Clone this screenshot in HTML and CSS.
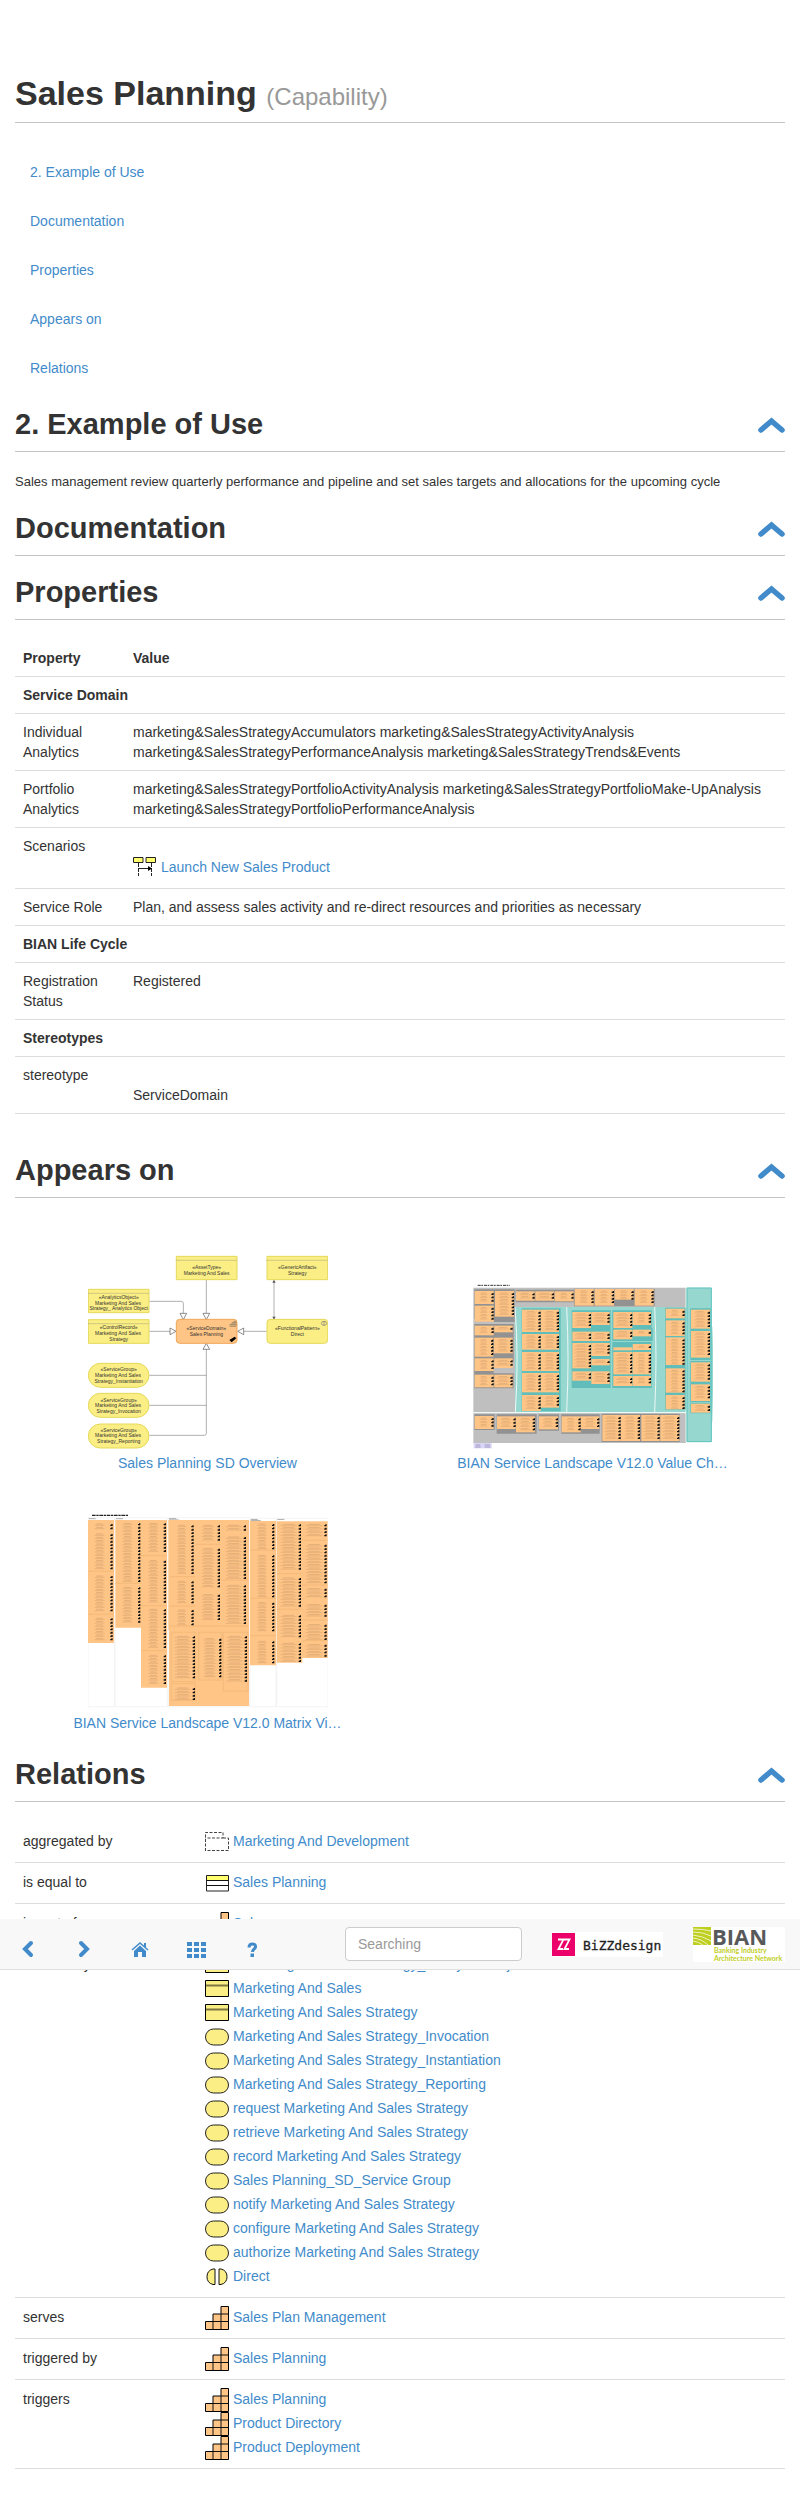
FILE: index.html
```html
<!DOCTYPE html>
<html lang="en">
<head>
<meta charset="utf-8">
<meta name="viewport" content="width=device-width, initial-scale=1">
<title>Sales Planning (Capability)</title>
<link rel="stylesheet" href="styles.css">
</head>
<body>
<svg class="symbols" aria-hidden="true">
  <symbol id="chev" viewBox="0 0 27 16"><path d="M3 13 13.500 4 24 13" fill="none" stroke="#428bca" stroke-width="5.500" stroke-linecap="round"/></symbol>
  <symbol id="steps" viewBox="0 0 24 24"><path d="M.5 15.500h7.500v-7.500h8v-7.500h7.500v23H.5z" fill="#ffc586" stroke="#000"/><path d="M8 15.500v8M16 8v15.500M8 15.500h15.500M16 8h7.500" stroke="#111" fill="none"/></symbol>
  <symbol id="object" viewBox="0 0 24 24"><path d="M.5 3.500h23v16H.5z" fill="#fbee84" stroke="#000"/><path d="M1 8.500h22" stroke="#7d7742" stroke-width="2"/></symbol>
  <symbol id="service" viewBox="0 0 24 24"><rect x=".5" y="4" width="23" height="16" rx="8" fill="#fbee84" stroke="#222"/></symbol>
  <symbol id="interaction" viewBox="0 0 24 24"><path d="M10 4H8a8 8 0 0 0 0 15.500h2z" fill="#fbee84" stroke="#111"/><path d="M14 4h2a8 8 0 0 1 0 15.500h-2z" fill="#fbee84" stroke="#111"/></symbol>
  <symbol id="group" viewBox="0 0 24 24"><path d="M.5 21V2.500H18V8H.5M18 8h5.500v12.500H.5" fill="none" stroke="#444" stroke-dasharray="3 1.500"/></symbol>
  <symbol id="equal" viewBox="0 0 24 24"><path d="M1.500 4.500h22v15.500h-22z" fill="#fff" stroke="#222"/><path d="M2 5h21v4H2z" fill="#ffff70"/><path d="M1.500 9.500h22M1.500 14.500h22" stroke="#111"/></symbol>
  <symbol id="sequence" viewBox="0 0 24 24"><path d="M.5 1.500h9.500v5H.5zM13 1.500h9.500v5H13z" fill="#ffff70" stroke="#222"/><path d="M5.500 7v13M18.500 7v13" stroke="#222" stroke-dasharray="4 1"/><path d="M5.500 12.500h11" stroke="#222"/><path d="M15 10l4 2.500-4 2.500z"/></symbol>
</svg>

<main class="page">
  <h1>Sales Planning <small>(Capability)</small></h1>
  <nav class="toc" aria-label="Sections">
    <a href="#example">2. Example of Use</a>
    <a href="#documentation">Documentation</a>
    <a href="#properties">Properties</a>
    <a href="#appears">Appears on</a>
    <a href="#relations">Relations</a>
  </nav>

  <section id="example">
    <div class="head"><h2>2. Example of Use</h2><a href="#top" aria-label="Back to top"><svg><use href="#chev"/></svg></a></div>
    <p class="lead">Sales management review quarterly performance and pipeline and set sales targets and allocations for the upcoming cycle</p>
  </section>
  <section id="documentation">
    <div class="head"><h2>Documentation</h2><a href="#top" aria-label="Back to top"><svg><use href="#chev"/></svg></a></div>
  </section>
  <section id="properties">
    <div class="head"><h2>Properties</h2><a href="#top" aria-label="Back to top"><svg><use href="#chev"/></svg></a></div>
    <table class="props">
      <thead><tr><th class="key">Property</th><th>Value</th></tr></thead>
      <tbody>
        <tr><th colspan="2">Service Domain</th></tr>
        <tr><td>Individual Analytics</td><td>marketing&amp;SalesStrategyAccumulators marketing&amp;SalesStrategyActivityAnalysis marketing&amp;SalesStrategyPerformanceAnalysis marketing&amp;SalesStrategyTrends&amp;Events</td></tr>
        <tr><td>Portfolio Analytics</td><td>marketing&amp;SalesStrategyPortfolioActivityAnalysis marketing&amp;SalesStrategyPortfolioMake-UpAnalysis marketing&amp;SalesStrategyPortfolioPerformanceAnalysis</td></tr>
        <tr><td>Scenarios</td><td><ul class="items below"><li><svg><use href="#sequence"/></svg><a href="#launch">Launch New Sales Product</a></li></ul></td></tr>
        <tr><td>Service Role</td><td>Plan, and assess sales activity and re-direct resources and priorities as necessary</td></tr>
        <tr><th colspan="2">BIAN Life Cycle</th></tr>
        <tr><td>Registration Status</td><td>Registered</td></tr>
        <tr><th colspan="2">Stereotypes</th></tr>
        <tr><td>stereotype</td><td><div class="below">ServiceDomain</div></td></tr>
      </tbody>
    </table>
  </section>

  <section id="appears">
    <div class="head"><h2>Appears on</h2><a href="#top" aria-label="Back to top"><svg><use href="#chev"/></svg></a></div>
    <div class="views">
      <a class="view" href="#overview">
        <svg class="thumb" viewBox="84 69 720 600">
          <g fill="none" stroke="#888" stroke-width="2"><path d="M268 214h96q6 0 6 6v30M439 150v100M268 304h62M620 304h-70M268 436h171M268 526h171M268 616h165q6 0 6-6V358"/><path d="M642 152v114"/></g>
          <g fill="#fff" stroke="#555" stroke-width="2"><path d="M360 250h20l-10 19zM429 250h20l-10 19zM330 294v20l18-10zM551 294v20l-18-10zM429 358h20l-10-18z"/></g>
          <path d="M642 149l5 9h-10zM642 269l5-9h-10z" fill="#555"/>
          <g fill="#fbee84" stroke="#e3d95a" stroke-width="3"><path d="M349 79h182v70H349zM621 79h182v70H621zM85 178h182v70H85zM85 269h182v71H85z"/><rect x="621" y="268" width="182" height="72" rx="10"/><rect x="85" y="400" width="182" height="72" rx="36"/><rect x="85" y="490" width="182" height="72" rx="36"/><rect x="85" y="582" width="182" height="72" rx="36"/></g>
          <path d="M347 91h184M619 91h184M82 190h185M82 281h185" stroke="#bdb77a" stroke-width="2"/>
          <rect x="349" y="268" width="182" height="72" rx="10" fill="#ffc586" stroke="#efa658" stroke-width="3"/>
          <path d="M510 289v-6h6v-5h6v-4h6v15zM516 289v-6h12M522 289v-11h6" fill="none" stroke="#665" stroke-width="1.500"/><path d="M508 330l16-10 5 5-14 12z"/><ellipse cx="792" cy="280" rx="8" ry="6" fill="none" stroke="#777" stroke-width="2"/><path d="M792 274v12" stroke="#777" stroke-width="2"/>
          <g class="tiny">
            <text x="440" y="117">«AssetType»</text><text x="440" y="135">Marketing And Sales</text>
            <text x="712" y="117">«GenericArtifact»</text><text x="712" y="135">Strategy</text>
            <text x="176" y="207">«AnalyticsObject»</text><text x="174" y="225">Marketing And Sales</text><text x="176" y="241">Strategy_ Analytics Object</text>
            <text x="176" y="297">«ControlRecord»</text><text x="174" y="315">Marketing And Sales</text><text x="176" y="333">Strategy</text>
            <text x="439" y="300">«ServiceDomain»</text><text x="439" y="318">Sales Planning</text>
            <text x="712" y="300">«FunctionalPattern»</text><text x="712" y="318">Direct</text>
            <text x="176" y="423">«ServiceGroup»</text><text x="174" y="441">Marketing And Sales</text><text x="176" y="459">Strategy_Instantiation</text>
            <text x="176" y="515">«ServiceGroup»</text><text x="174" y="531">Marketing And Sales</text><text x="176" y="549">Strategy_Invocation</text>
            <text x="176" y="606">«ServiceGroup»</text><text x="174" y="621">Marketing And Sales</text><text x="176" y="639">Strategy_Reporting</text>
          </g>
        </svg>
        <span>Sales Planning SD Overview</span>
      </a>
      <a class="view" href="#valuechain">
        <svg class="thumb" viewBox="97 -21 720 600">
          <g transform="translate(0 0)">
          <path d="M111 76h97" stroke="#333" stroke-width="3" stroke-dasharray="9 2 5 3"/>
          <path d="M98 83h638v373H98zM98 459h638v90H98z" fill="#bfbfbf"/>
          <path d="M223 141h514v315H223zM737 83h76v463h-76z" fill="#96d8d0"/>
          <path d="M813 200q5 115 0 285" fill="#96d8d0" stroke="#96d8d0" stroke-width="4"/>
          <path d="M223 141q12 150 1 315M378 141q8 150 0 315M642 141q8 150 0 315M736 83v463M98 458h638" fill="none" stroke="#edf8f5" stroke-width="3"/>
          <path d="M739 84h73v461h-73z" fill="none" stroke="#5fc4be" stroke-width="3"/>
          <g fill="#929292"><path d="M101 88h121v98H160v-10h-59zM101 192h118v39H101zM101 230h118v76h-60v37h-58zM101 340h118v45H101zM225 89h175v38H225zM400 86h242v53H400zM101 463h61v47h-61zM168 463h120v58H168zM294 463h61v49h-61zM362 463h115v58H362zM483 461h234v85H483z"/></g>
          <g fill="#60bdb9"><path d="M243 145h117v309H243zM393 151h117v61H393zM393 211h117v121H393zM393 329h117v55H393zM515 151h118v56H515zM515 205h121v38H515zM515 246h118v99H515zM515 344h118v40H515zM673 143h62v306h-62zM749 145h61v64h-61zM749 208h61v92h-61zM749 303h61v64h-61zM749 367h61v60h-61zM749 429h61v31h-61z"/></g>
          <g id="landscape-boxes"></g>
          <path d="M99 549h54v16H99z" fill="#d9d5f5"/><path d="M105 555h14M132 555h16M104 561h16M132 561h17" stroke="#887eaa" stroke-width="2"/>
          </g>
        </svg>
        <span>BIAN Service Landscape V12.0 Value Ch…</span>
      </a>
      <a class="view" href="#matrix">
        <svg class="thumb" viewBox="84 69 720 600">
          <path d="M96 76h108" stroke="#222" stroke-width="4" stroke-dasharray="11 2 7 2"/>
          <path d="M86 86h21M168 86h21M327 86h22M572 88h21M652 88h21M327 90h30M572 92h30" stroke="#777" stroke-width="2"/>
          <path d="M84 83h79v567H84zM165 83h157v567H165zM325 83h243v567H325zM570 85h78v565h-78zM650 85h154v565H650z" fill="none" stroke="#eee" stroke-width="2"/>
          <path d="M84 90h78v369H84zM166 90h155v503h-78V413h-77zM325 90h242v558H327V420h-2zM570 93h78v433h-78zM650 94h153v410h-76v14h-77z" fill="#ffc586"/>
          <path d="M84 244h78M84 373h78M166 280h76M243 197h77M243 347h77M243 482h77M329 260h76M329 348h76M407 163h76M329 408h154M485 270h79M485 408h79M571 180h76M571 325h76M571 437h76M651 251h76M651 358h76M728 151h75M728 285h75M728 390h75M728 452h75M334 427h72v148h-72zM334 581h72v50h-72zM416 427h70v143h-70zM490 427h74v176h-74z" fill="none" stroke="#edb374" stroke-width="2"/>
          <g id="matrix-stacks"></g>
        </svg>
        <span>BIAN Service Landscape V12.0 Matrix Vi…</span>
      </a>
    </div>
  </section>

  <section id="relations">
    <div class="head"><h2>Relations</h2><a href="#top" aria-label="Back to top"><svg><use href="#chev"/></svg></a></div>
    <table class="rels">
      <tbody>
        <tr><td class="key">aggregated by</td><td><ul class="items"><li><svg><use href="#group"/></svg><a href="#r1">Marketing And Development</a></li></ul></td></tr>
        <tr><td>is equal to</td><td><ul class="items"><li><svg><use href="#equal"/></svg><a href="#r2">Sales Planning</a></li></ul></td></tr>
        <tr><td>is part of</td><td><ul class="items"><li><svg><use href="#steps"/></svg><a href="#r3">Sales</a></li></ul></td></tr>
        <tr><td>realized by</td><td><ul class="items">
          <li><svg><use href="#object"/></svg><a href="#r4">Marketing And Sales Strategy_ Analytics Object</a></li>
          <li><svg><use href="#object"/></svg><a href="#r5">Marketing And Sales</a></li>
          <li><svg><use href="#object"/></svg><a href="#r6">Marketing And Sales Strategy</a></li>
          <li><svg><use href="#service"/></svg><a href="#r7">Marketing And Sales Strategy_Invocation</a></li>
          <li><svg><use href="#service"/></svg><a href="#r8">Marketing And Sales Strategy_Instantiation</a></li>
          <li><svg><use href="#service"/></svg><a href="#r9">Marketing And Sales Strategy_Reporting</a></li>
          <li><svg><use href="#service"/></svg><a href="#r10">request Marketing And Sales Strategy</a></li>
          <li><svg><use href="#service"/></svg><a href="#r11">retrieve Marketing And Sales Strategy</a></li>
          <li><svg><use href="#service"/></svg><a href="#r12">record Marketing And Sales Strategy</a></li>
          <li><svg><use href="#service"/></svg><a href="#r13">Sales Planning_SD_Service Group</a></li>
          <li><svg><use href="#service"/></svg><a href="#r14">notify Marketing And Sales Strategy</a></li>
          <li><svg><use href="#service"/></svg><a href="#r15">configure Marketing And Sales Strategy</a></li>
          <li><svg><use href="#service"/></svg><a href="#r16">authorize Marketing And Sales Strategy</a></li>
          <li><svg><use href="#interaction"/></svg><a href="#r17">Direct</a></li>
        </ul></td></tr>
        <tr><td>serves</td><td><ul class="items"><li><svg><use href="#steps"/></svg><a href="#r18">Sales Plan Management</a></li></ul></td></tr>
        <tr><td>triggered by</td><td><ul class="items"><li><svg><use href="#steps"/></svg><a href="#r19">Sales Planning</a></li></ul></td></tr>
        <tr><td>triggers</td><td><ul class="items">
          <li><svg><use href="#steps"/></svg><a href="#r20">Sales Planning</a></li>
          <li><svg><use href="#steps"/></svg><a href="#r21">Product Directory</a></li>
          <li><svg><use href="#steps"/></svg><a href="#r22">Product Deployment</a></li>
        </ul></td></tr>
      </tbody>
    </table>
  </section>
</main>

<header class="bar">
  <div class="tools">
    <button type="button" aria-label="Back"><svg width="20" height="20"><path d="M13 4 7 10l6 6" fill="none" stroke="#428bca" stroke-width="4" stroke-linecap="round"/></svg></button>
    <button type="button" aria-label="Forward"><svg width="20" height="20"><path d="M7 4l6 6-6 6" fill="none" stroke="#428bca" stroke-width="4" stroke-linecap="round"/></svg></button>
    <a href="#home" aria-label="Home"><svg width="20" height="20"><path d="M2 11 10 4l8 7" fill="none" stroke="#428bca" stroke-width="1.500"/><path d="M14 4h2v5l-2-2zM10 6.500l6 5.500v6h-4v-5H8v5H4v-6z" fill="#428bca"/></svg></a>
    <a href="#views" aria-label="Views"><svg width="20" height="20" fill="#428bca"><path d="M1 3h5v4H1zM8 3h5v4H8zM15 3h5v4h-5zM1 9h5v4H1zM8 9h5v4H8zM15 9h5v4h-5zM1 15h5v4H1zM8 15h5v4H8zM15 15h5v4h-5z"/></svg></a>
    <a href="#help" aria-label="Help"><svg width="20" height="20"><path d="M7 8.500C7 3.500 14 4 13.500 8c-.2 2-3 2-3 5" fill="none" stroke="#428bca" stroke-width="3"/><path d="M8.500 14.500H12V18H8.500z" fill="#428bca"/></svg></a>
  </div>
  <input type="search" placeholder="Searching" aria-label="Search">
  <a class="logo" href="#bizzdesign" aria-label="BiZZdesign"><svg width="111" height="25"><path d="M0 0h111v25H0z" fill="#fff"/><path d="M0 1h23v23H0z" fill="#ec0069"/><path d="M6 7.500h5.500L6.500 17H11M12 7.500h5.500L12.500 17H17" fill="none" stroke="#fff" stroke-width="1.800"/><text class="bizz" x="31" y="18">BiZZdesign</text></svg></a>
  <a class="logo" href="#bian" aria-label="BIAN"><svg width="92" height="35"><path d="M0 0h92v35H0z" fill="#fff"/><path d="M0 0h18v18H0z" fill="#bfcf1f"/><path d="M0 2q10 0 18 2M0 5q10 0 18 4M0 8q10 1 18 6M0 11q9 1 15 7M0 14q6 1 10 4" fill="none" stroke="#eef3c2"/><text class="bian" x="19" y="18">BIAN</text><text class="green" x="21" y="26">Banking Industry</text><text class="green" x="21" y="34">Architecture Network</text></svg></a>
</header>
<script src="thumbs.js"></script>
</body>
</html>
```

FILE: styles.css
```css
* { box-sizing: border-box; }
body {
  margin: 0;
  position: relative;
  background: #fff;
  color: #333;
  font: 14px/20px "Liberation Sans", Arial, sans-serif;
}
a { color: #428bca; text-decoration: none; }
.symbols { position: absolute; width: 0; height: 0; }
.page { padding: 60px 15px 50px; }

h1, h2 { margin: 0; font-weight: 700; }
h1 {
  padding: 13px 0 9px;
  border-bottom: 1px solid #c4c4c4;
  font-size: 34px;
  line-height: 40px;
}
h1 small { font-size: 24px; font-weight: 400; line-height: 24px; color: #999; }
h2 { font-size: 29px; line-height: 33px; }

.toc { display: flex; flex-direction: column; align-items: flex-start; gap: 9px; padding-top: 29px; }
.toc a { padding: 10px 15px; }

.head {
  display: flex;
  justify-content: space-between;
  align-items: center;
  padding: 20px 0 10px;
  border-bottom: 1px solid #c4c4c4;
}
.head svg { display: block; width: 27px; height: 16px; }
.lead { margin: 20px 0 0; font-size: 13px; }

table { width: 100%; margin: 20px 0 0; border-spacing: 0; border-bottom: 1px solid #ddd; table-layout: fixed; }
th, td { padding: 8px; text-align: left; vertical-align: top; border-top: 1px solid #ddd; }
.props { margin-bottom: 20px; }
.props thead th { border-top: 0; }
.props .key { width: 110px; }
.rels { line-height: 22px; }
.rels .key { width: 182px; }
.rels tr:first-child td { border-top: 0; }
.below { margin-top: 20px; }

.items { margin: 0; padding: 0; list-style: none; }
.items.below { margin-top: 20px; }
.items li { display: flex; gap: 4px; height: 24px; line-height: 22px; }
.items svg { width: 24px; height: 24px; flex: none; }

.views { display: grid; grid-template-columns: 1fr 1fr; row-gap: 40px; padding: 55px 0 5px; }
.view { display: flex; flex-direction: column; align-items: center; }
.thumb { width: 240px; height: 200px; }
.tiny { font-size: 15px; fill: #333; text-anchor: middle; }

.bar {
  position: absolute;
  top: 1919px;
  left: 0;
  right: 0;
  display: flex;
  justify-content: space-between;
  align-items: center;
  height: 51px;
  padding-right: 15px;
  background: #f8f8f8;
  border-bottom: 1px solid #e0e0e0;
}
.tools { display: flex; margin-right: 35px; }
.tools button, .tools a {
  display: flex;
  justify-content: center;
  width: 56px;
  margin: 0;
  padding: 10px 0 0;
  border: 0;
  background: none;
}
.bar input {
  width: 177px;
  height: 34px;
  padding: 6px 12px;
  border: 1px solid #ccc;
  border-radius: 4px;
  background: #fff;
  font: inherit;
}
.bar input::placeholder { color: #999; opacity: 1; }
.logo svg { display: block; overflow: visible; }
.bizz { font: 13px "DejaVu Sans Mono", monospace; fill: #222; stroke: #222; stroke-width: 0.3px; }
.bian { font: bold 22px "Open Sans", sans-serif; fill: #58595b; }
.green { font: bold 7px Lato, sans-serif; fill: #bfcf1f; }
```

FILE: thumbs.js
```js
const NS = "http://www.w3.org/2000/svg";

function add(parent, name, attrs) {
  const el = document.createElementNS(NS, name);
  for (const key in attrs) el.setAttribute(key, attrs[key]);
  parent.appendChild(el);
}

// A column of small labels with a black marker at the right of each one
function column(parent, x, y, w, h, step) {
  const mid = x + w * 0.47;
  const end = x + w - 3;
  for (let t = y + 6, i = 0; t < y + h - 4; t += step, i++) {
    const half = w * (0.2 + 0.07 * ((i * 3 + x) % 3));
    add(parent, "path", { d: `M${mid - half * 0.7} ${t}h${half * 1.4}`, stroke: "#c4976a", "stroke-width": 1.5 });
    add(parent, "path", { d: `M${mid - half} ${t + 4}h${half * 2}`, stroke: "#cf9f6d", "stroke-width": 1.5 });
    add(parent, "path", { d: `M${end - 4} ${t + 2}h3v-2h4v6h-7z`, fill: "#111" });
  }
}

const boxes = [
  [102,93,57,39],[102,137,57,48],[163,93,57,77],[102,197,57,29],[161,197,55,20],
  [102,233,56,57],[160,233,56,47],[102,295,57,38],[161,295,55,29],[102,344,57,38],[161,344,55,38],
  [226,94,56,28],[284,94,56,28],[342,94,57,30],[402,87,57,50],[462,87,58,50],[522,87,57,32],[582,87,57,50],
  [244,149,56,67],[301,149,54,67],[244,222,56,47],[301,222,54,47],[244,276,56,57],[301,276,54,57],
  [244,339,56,58],[301,339,54,58],[244,405,56,48],[301,405,54,38],
  [395,156,56,48],[452,156,55,39],[395,215,56,28],[452,215,55,28],[395,249,56,76],[452,249,55,39],
  [452,297,55,19],[395,334,56,28],[452,334,55,38],[518,156,57,48],[576,156,55,39],
  [518,209,57,29],[576,209,55,20],[518,262,57,9],[576,252,55,18],[518,276,57,67],[576,276,55,67],[518,348,57,30],[576,348,55,30],
  [675,146,57,29],[675,181,57,47],[675,232,57,83],[675,325,57,73],[675,405,57,43],
  [751,149,57,57],[751,213,57,80],[751,307,57,58],[751,373,57,50],[751,431,57,27],
  [102,468,57,39],[169,469,56,38],[226,469,57,48],[295,469,57,39],[363,469,57,48],[421,469,55,38],
  [485,465,55,78],[541,465,57,78],[602,465,55,78],[659,465,57,78]
];
const landscape = document.getElementById("landscape-boxes");
for (const [x, y, w, h] of boxes) {
  add(landscape, "rect", { x, y, width: w, height: h, fill: "#ffc586" });
  column(landscape, x, y, w, h, 10);
}

const stacks = [
  [84,96,74,26],[84,126,74,112],[84,252,74,120],[84,379,74,78],
  [168,94,73,186],[168,286,73,118],[246,94,72,100],[246,206,72,140],[246,352,72,130],[246,490,72,96],
  [333,100,68,160],[333,268,68,78],[333,354,68,54],[412,100,68,60],[412,170,68,128],[412,308,68,86],
  [488,100,70,24],[488,135,70,135],[488,280,70,126],
  [335,433,70,138],[335,588,70,42],[418,440,66,128],[491,433,70,148],
  [573,96,70,82],[573,190,70,134],[573,332,70,98],[573,448,70,72],
  [653,97,70,142],[653,258,70,98],[653,370,70,74],[653,454,70,64],
  [728,97,72,50],[728,158,72,128],[728,290,72,36],[728,338,72,50],[728,398,72,52],[728,458,72,44]
];
const matrix = document.getElementById("matrix-stacks");
for (const [x, y, w, h] of stacks) column(matrix, x, y, w, h, 10);
```
